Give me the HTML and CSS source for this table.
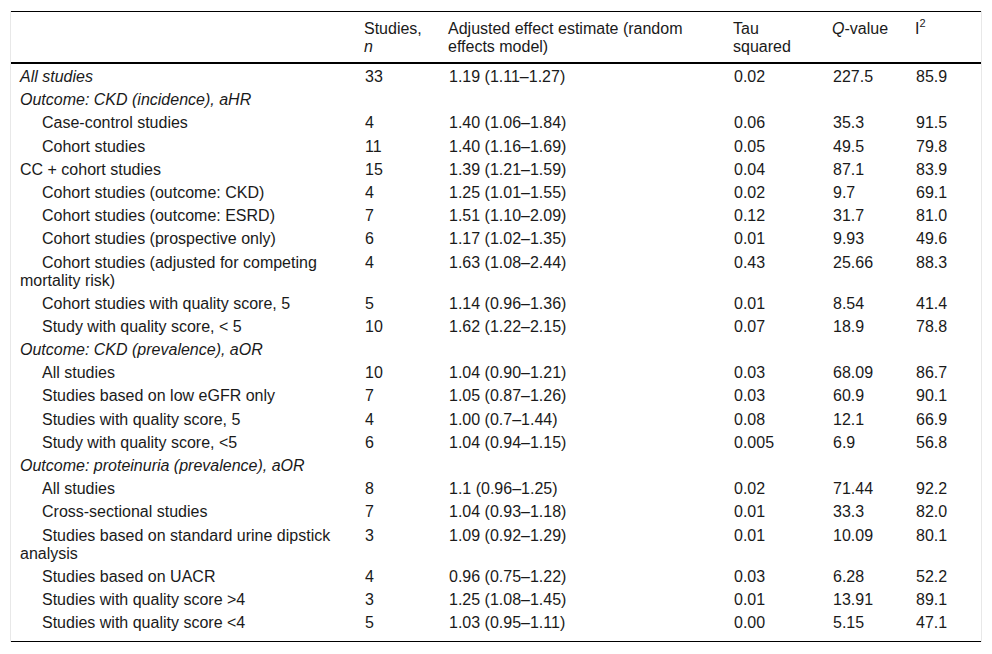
FILE: index.html
```html
<!DOCTYPE html>
<html>
<head>
<meta charset="utf-8">
<link rel="stylesheet" href="styles.css">
</head>
<body>
<div class="frame">
<table class="data">
<colgroup>
<col class="c1"><col class="c2"><col class="c3"><col class="c4"><col class="c5"><col class="c6">
</colgroup>
<thead>
<tr>
<th></th>
<th>Studies,<br><i>n</i></th>
<th>Adjusted effect estimate (random effects model)</th>
<th>Tau<br>squared</th>
<th><i>Q</i>-value</th>
<th>I<sup>2</sup></th>
</tr>
</thead>
<tbody>
<tr class="first"><td><i>All studies</i></td><td>33</td><td>1.19 (1.11–1.27)</td><td>0.02</td><td>227.5</td><td>85.9</td></tr>
<tr><td colspan="6"><i>Outcome: CKD (incidence), aHR</i></td></tr>
<tr><td class="ind">Case-control studies</td><td>4</td><td>1.40 (1.06–1.84)</td><td>0.06</td><td>35.3</td><td>91.5</td></tr>
<tr><td class="ind">Cohort studies</td><td>11</td><td>1.40 (1.16–1.69)</td><td>0.05</td><td>49.5</td><td>79.8</td></tr>
<tr><td>CC + cohort studies</td><td>15</td><td>1.39 (1.21–1.59)</td><td>0.04</td><td>87.1</td><td>83.9</td></tr>
<tr><td class="ind">Cohort studies (outcome: CKD)</td><td>4</td><td>1.25 (1.01–1.55)</td><td>0.02</td><td>9.7</td><td>69.1</td></tr>
<tr><td class="ind">Cohort studies (outcome: ESRD)</td><td>7</td><td>1.51 (1.10–2.09)</td><td>0.12</td><td>31.7</td><td>81.0</td></tr>
<tr><td class="ind">Cohort studies (prospective only)</td><td>6</td><td>1.17 (1.02–1.35)</td><td>0.01</td><td>9.93</td><td>49.6</td></tr>
<tr><td class="ind">Cohort studies (adjusted for competing mortality risk)</td><td>4</td><td>1.63 (1.08–2.44)</td><td>0.43</td><td>25.66</td><td>88.3</td></tr>
<tr><td class="ind">Cohort studies with quality score, 5</td><td>5</td><td>1.14 (0.96–1.36)</td><td>0.01</td><td>8.54</td><td>41.4</td></tr>
<tr><td class="ind">Study with quality score, &lt; 5</td><td>10</td><td>1.62 (1.22–2.15)</td><td>0.07</td><td>18.9</td><td>78.8</td></tr>
<tr><td colspan="6"><i>Outcome: CKD (prevalence), aOR</i></td></tr>
<tr><td class="ind">All studies</td><td>10</td><td>1.04 (0.90–1.21)</td><td>0.03</td><td>68.09</td><td>86.7</td></tr>
<tr><td class="ind">Studies based on low eGFR only</td><td>7</td><td>1.05 (0.87–1.26)</td><td>0.03</td><td>60.9</td><td>90.1</td></tr>
<tr><td class="ind">Studies with quality score, 5</td><td>4</td><td>1.00 (0.7–1.44)</td><td>0.08</td><td>12.1</td><td>66.9</td></tr>
<tr><td class="ind">Study with quality score, &lt;5</td><td>6</td><td>1.04 (0.94–1.15)</td><td>0.005</td><td>6.9</td><td>56.8</td></tr>
<tr><td colspan="6"><i>Outcome: proteinuria (prevalence), aOR</i></td></tr>
<tr><td class="ind">All studies</td><td>8</td><td>1.1 (0.96–1.25)</td><td>0.02</td><td>71.44</td><td>92.2</td></tr>
<tr><td class="ind">Cross-sectional studies</td><td>7</td><td>1.04 (0.93–1.18)</td><td>0.01</td><td>33.3</td><td>82.0</td></tr>
<tr><td class="ind">Studies based on standard urine dipstick analysis</td><td>3</td><td>1.09 (0.92–1.29)</td><td>0.01</td><td>10.09</td><td>80.1</td></tr>
<tr><td class="ind">Studies based on UACR</td><td>4</td><td>0.96 (0.75–1.22)</td><td>0.03</td><td>6.28</td><td>52.2</td></tr>
<tr><td class="ind">Studies with quality score &gt;4</td><td>3</td><td>1.25 (1.08–1.45)</td><td>0.01</td><td>13.91</td><td>89.1</td></tr>
<tr class="last"><td class="ind">Studies with quality score &lt;4</td><td>5</td><td>1.03 (0.95–1.11)</td><td>0.00</td><td>5.15</td><td>47.1</td></tr>
</tbody>
</table>
</div>
</body>
</html>
```

FILE: styles.css
```css
html, body {
  margin: 0;
  padding: 0;
  background: #fff;
}
body {
  padding: 11px 10px 0 10px;
  font-family: "Liberation Sans", Arial, sans-serif;
  font-size: 16px;
  color: #1a1a1a;
}
.frame {
  border-left: 1px solid #e8e8e8;
  border-right: 1px solid #e8e8e8;
  width: 970px;
}
.data {
  width: 970px;
  table-layout: fixed;
  border-collapse: collapse;
  border-top: 1px solid #000;
  border-bottom: 1px solid #000;
}
.c1 { width: 345px; }
.c2 { width: 84px; }
.c3 { width: 285px; }
.c4 { width: 99px; }
.c5 { width: 83px; }
.c6 { width: 74px; }
.data th {
  font-weight: normal;
  text-align: left;
  vertical-align: top;
  line-height: 18px;
  padding: 8px 8px 6px 8px;
  border-bottom: 2px solid #000;
}
.data th sup {
  font-size: 11px;
  line-height: 0;
  position: relative;
  top: -1px;
}
.data td {
  text-align: left;
  vertical-align: top;
  line-height: 18px;
  padding: 2px 8px 3.2px 9px;
}
.data tr.first td {
  padding-top: 4px;
}
.data td.ind {
  text-indent: 22px;
}
.data tr.last td {
  padding-bottom: 9px;
}
```
